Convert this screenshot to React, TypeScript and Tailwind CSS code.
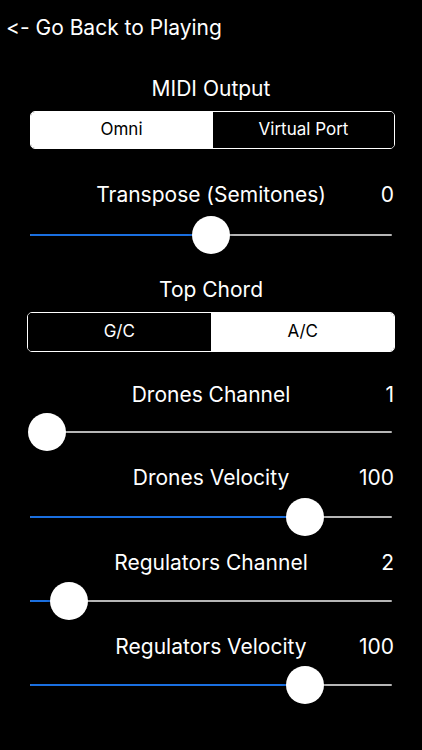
import React from "react";

type SliderProps = { frac: number };

function Slider({ frac }: SliderProps) {
  // frame 28..394 on the page, thumb 38px
  const center = 19 + frac * (366 - 38);
  return (
    <div className="relative ml-[28px] w-[366px] h-[40px]">
      <div className="absolute left-[2px] right-[2px] top-[19px] h-[2px] bg-[#b6b6b6] rounded-full" />
      <div
        className="absolute left-[2px] top-[19px] h-[2px] bg-[#1a6fe0] rounded-full"
        style={{ width: center - 2 }}
      />
      <div
        className="absolute top-[1px] w-[38px] h-[38px] rounded-full bg-white shadow-[0_2px_4px_rgba(0,0,0,0.3)]"
        style={{ left: center - 19 }}
      />
    </div>
  );
}

function Label({ text, value }: { text: string; value?: string }) {
  return (
    <div className="relative h-[25px] leading-[25px] text-[21px] text-white text-center">
      {text}
      {value !== undefined && (
        <span className="absolute right-[28px] top-0">{value}</span>
      )}
    </div>
  );
}

function Segmented({
  options,
  selected,
  className,
}: {
  options: string[];
  selected: number;
  className: string;
}) {
  return (
    <div className={"flex border border-white rounded-[5px] overflow-hidden " + className}>
      {options.map((o, i) => (
        <div
          key={o}
          className={
            "flex-1 flex items-center justify-center text-[17px] " +
            (i === selected ? "bg-white text-black" : "bg-black text-white") +
            (i > 0 ? " border-l border-white" : "")
          }
        >
          {o}
        </div>
      ))}
    </div>
  );
}

export default function App() {
  return (
    <div
      className="w-[422px] h-[750px] bg-black text-white overflow-hidden flex flex-col [font-feature-settings:'calt'_0]"
      style={{ fontFamily: "Inter, 'Noto Sans', sans-serif" }}
    >
      {/* BACK */}
      <div className="mt-[15px] pl-[6px] h-[25px] leading-[25px] text-[21px]">
        &lt;- Go Back to Playing
      </div>

      {/* MIDI OUTPUT */}
      <div className="mt-[36px]">
        <Label text="MIDI Output" />
      </div>
      <Segmented
        options={["Omni", "Virtual Port"]}
        selected={0}
        className="mt-[10px] ml-[30px] w-[365px] h-[38px]"
      />

      {/* TRANSPOSE */}
      <div className="mt-[33px]">
        <Label text="Transpose (Semitones)" value="0" />
      </div>
      <div className="mt-[8px]">
        <Slider frac={0.5} />
      </div>

      {/* TOP CHORD */}
      <div className="mt-[22px]">
        <Label text="Top Chord" />
      </div>
      <Segmented
        options={["G/C", "A/C"]}
        selected={1}
        className="mt-[10px] ml-[27px] w-[368px] h-[40px]"
      />

      {/* CHANNELS */}
      <div className="mt-[30px]">
        <Label text="Drones Channel" value="1" />
      </div>
      <div className="mt-[5px]">
        <Slider frac={0} />
      </div>

      <div className="mt-[13px]">
        <Label text="Drones Velocity" value="100" />
      </div>
      <div className="mt-[7px]">
        <Slider frac={100 / 127} />
      </div>

      <div className="mt-[13px]">
        <Label text="Regulators Channel" value="2" />
      </div>
      <div className="mt-[6px]">
        <Slider frac={1 / 15} />
      </div>

      <div className="mt-[13px]">
        <Label text="Regulators Velocity" value="100" />
      </div>
      <div className="mt-[6px]">
        <Slider frac={100 / 127} />
      </div>
    </div>
  );
}
